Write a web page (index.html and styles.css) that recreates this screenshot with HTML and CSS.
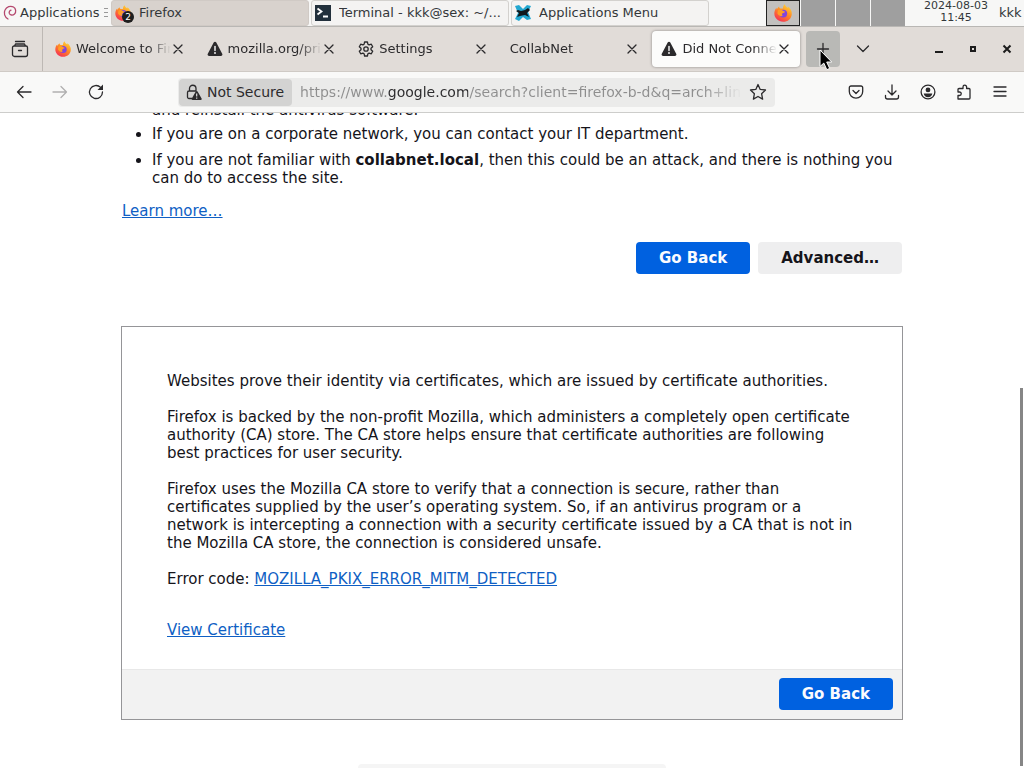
FILE: index.html
```html
<!DOCTYPE html>
<html lang="en">
<head>
  <meta charset="UTF-8">
  <meta name="viewport" content="width=device-width, initial-scale=1">
  <title>Did Not Connect</title>
  <link rel="stylesheet" href="styles.css">
</head>
<body>
  <svg class="defs" aria-hidden="true">
    <defs>
      <linearGradient id="fire" x1="0.8" y1="0" x2="0.2" y2="1">
        <stop offset="0" stop-color="#ffd93b"/>
        <stop offset="0.45" stop-color="#ff8a22"/>
        <stop offset="1" stop-color="#f5295a"/>
      </linearGradient>
      <symbol id="firefox" viewBox="0 0 16 16">
        <path fill="url(#fire)" d="M9.6 0.3c0.3 1.6 1.6 2.3 2.6 3.3 0.2-0.5 0.1-0.9 0-1.300C14.700 3.900 16 6.200 15.800 9c-0.300 4-3.600 6.800-7.700 6.800C3.800 15.800 0.300 12.600 0.300 8.500c0-1.900 0.600-3.700 1.900-5.100l0.200 1.500C3 4 3.500 3 4.500 2.300c0 0.800 0.400 1.400 1 1.800 1-0.200 1.700-0.200 2.400 0C8 2.500 8.500 1.100 9.600 0.300z"/>
        <circle cx="8.200" cy="8.500" r="3.500" fill="#8244dc"/>
        <path fill="#ff9d25" d="M3.500 5.500c1.500-1 3.200-0.600 4.400 0.500 0.500 0.500 1.500 0.600 2 0.800-0.300 0.800-1.500 1-2 1.300-0.900 0.500-1 1.700-0.200 2.400-1 0.800-3.200 0.600-4.700-2z"/>
      </symbol>
      <symbol id="warning" viewBox="0 0 16 16">
        <path fill="#2b2a2c" d="M6.700 1.500a1.500 1.500 0 0 1 2.600 0l5.900 11.200a1.500 1.500 0 0 1-1.300 2.200H2.100a1.500 1.500 0 0 1-1.300-2.200z"/>
        <path stroke="#fff" stroke-width="1.400" stroke-linecap="round" d="M8 5.500v4"/>
        <circle cx="8" cy="12" r="0.900" fill="#fff"/>
      </symbol>
      <symbol id="close" viewBox="0 0 12 12">
        <path class="line" d="M2 2l8 8M10 2l-8 8"/>
      </symbol>
    </defs>
  </svg>

  <!-- desktop panel -->
  <div class="panel">
    <button class="apps">
      <svg width="14" height="16" viewBox="0 0 14 16"><path fill="none" stroke="#b5486e" stroke-width="1.300" stroke-linecap="round" d="M5 14C1.500 12 0.500 8 2 5c1.500-3.300 5.500-4.600 8.500-3C13 3.500 13.400 7 11.500 9 9.800 10.600 7 10.300 6.300 8.400 5.800 6.800 6.800 5.500 8 5.200"/></svg>
      Applications
    </button>
    <span class="grip"></span>
    <div class="tasks">
      <button class="task pressed">
        <span class="task-icon"><svg width="16" height="16"><use href="#firefox"/></svg><span class="badge">2</span></span>
        <span class="task-name">Firefox</span>
      </button>
      <button class="task">
        <span class="task-icon"><svg width="16" height="16" viewBox="0 0 16 16"><path fill="#22303c" d="M0 0h16v16H0z"/><path fill="none" stroke="#fff" stroke-width="1.800" d="M2.500 3.500l4 3-4 3M8 11.500h5"/></svg></span>
        <span class="task-name">Terminal - kkk@sex: ~/...</span>
      </button>
      <button class="task">
        <span class="task-icon"><svg width="16" height="16" viewBox="0 0 16 16"><path fill="#22a7d0" d="M0 1l4-1 4 4 4-4 4 1-3 6 3 7-4 1-4-3-4 4-4-2 3-6z"/><path fill="#10181c" d="M3 5l3 1 4-1 3-2 2 2-3 3 2 4-4-2-5 1-3 1 2-4-3-2z"/></svg></span>
        <span class="task-name">Applications Menu</span>
      </button>
    </div>
    <div class="pager">
      <span class="desk current"><svg width="18" height="18"><use href="#firefox"/></svg></span>
      <span class="desk"></span>
      <span class="desk"></span>
      <span class="desk"></span>
    </div>
    <div class="clock">2024-08-03<br>11:45</div>
    <div class="user">kkk</div>
  </div>

  <!-- tab strip -->
  <div class="tabbar">
    <button class="view" aria-label="Firefox View">
      <svg width="18" height="18" viewBox="0 0 18 18"><path class="line" d="M4.500 1.500h9M3.500 6l1-2h9l1 2M3 6h12a1.500 1.500 0 0 1 1.500 1.500v7a2 2 0 0 1-2 2h-11a2 2 0 0 1-2-2v-7A1.500 1.500 0 0 1 3 6zM7.500 10.500h3"/></svg>
    </button>
    <div class="tabs">
      <div class="tab">
        <svg width="16" height="16"><use href="#firefox"/></svg>
        <span class="title">Welcome to Firefox</span>
        <button class="close" aria-label="Close tab"><svg width="12" height="12"><use href="#close"/></svg></button>
      </div>
      <div class="tab">
        <svg width="16" height="16"><use href="#warning"/></svg>
        <span class="title">mozilla.org/privacy</span>
        <button class="close" aria-label="Close tab"><svg width="12" height="12"><use href="#close"/></svg></button>
      </div>
      <div class="tab">
        <svg width="16" height="16" viewBox="0 0 16 16"><path class="line" d="M6.600 1h2.800l0.500 2.200 1.200 0.700 2.200-0.700 1.400 2.500L13 7.200v1.600l1.700 1.500-1.400 2.500-2.200-0.700-1.200 0.700L9.400 15H6.600l-0.500-2.200-1.200-0.700-2.200 0.700-1.400-2.500L3 8.800V7.200L1.300 5.700l1.400-2.500 2.200 0.700 1.200-0.700z"/><circle class="line" cx="8" cy="8" r="2.200"/></svg>
        <span class="title">Settings</span>
        <button class="close" aria-label="Close tab"><svg width="12" height="12"><use href="#close"/></svg></button>
      </div>
      <div class="tab">
        <span class="title">CollabNet</span>
        <button class="close" aria-label="Close tab"><svg width="12" height="12"><use href="#close"/></svg></button>
      </div>
      <div class="tab active">
        <svg width="16" height="16"><use href="#warning"/></svg>
        <span class="title">Did Not Connect</span>
        <button class="close" aria-label="Close tab"><svg width="12" height="12"><use href="#close"/></svg></button>
      </div>
    </div>
    <button class="icon-btn new-tab" aria-label="New tab">
      <svg width="16" height="16" viewBox="0 0 16 16"><path class="line" d="M8 2.500v11M2.500 8h11"/></svg>
      <svg class="pointer" width="14" height="22" viewBox="0 0 14 22"><path fill="#000" stroke="#fff" d="M1 1v16.500l3.800-3.400 3 6.600 2.900-1.300-3-6.400h5z"/></svg>
    </button>
    <button class="icon-btn" aria-label="List all tabs">
      <svg width="16" height="16" viewBox="0 0 16 16"><path class="line" d="M2.500 5l5.500 5.500L13.500 5"/></svg>
    </button>
    <div class="window-controls">
      <button class="icon-btn" aria-label="Minimize"><svg width="10" height="10" viewBox="0 0 10 10"><path fill="#1c1c1c" d="M1 7h8v2H1z"/></svg></button>
      <button class="icon-btn" aria-label="Restore"><svg width="10" height="10" viewBox="0 0 10 10"><path fill="none" stroke="#1c1c1c" stroke-width="2" d="M3 3h4v4H3z"/></svg></button>
      <button class="icon-btn" aria-label="Close"><svg width="10" height="10" viewBox="0 0 10 10"><path stroke="#1c1c1c" stroke-width="2" d="M1.500 1.500l7 7M8.500 1.500l-7 7"/></svg></button>
    </div>
  </div>

  <!-- navigation bar -->
  <div class="toolbar">
    <button class="tool" aria-label="Back"><svg width="16" height="16" viewBox="0 0 16 16"><path class="line" d="M15 8H1.500M7 2.500L1.500 8 7 13.500"/></svg></button>
    <button class="tool" aria-label="Forward" disabled><svg width="16" height="16" viewBox="0 0 16 16"><path class="line" d="M1 8h13.500M9 2.500L14.500 8 9 13.500"/></svg></button>
    <button class="tool" aria-label="Reload"><svg width="16" height="16" viewBox="0 0 16 16"><path class="line" d="M14.500 8A6.500 6.500 0 1 1 12.600 3.400L14 4.800"/><path fill="#2b2a2c" d="M15 0.500V6H9.500z"/></svg></button>
    <div class="urlbar">
      <button class="identity">
        <svg width="16" height="16" viewBox="0 0 16 16"><path class="line" d="M6 14.500H3a1.500 1.500 0 0 1-1.500-1.500V8.500A1.500 1.500 0 0 1 3 7h7M3.500 7V4.500a3.200 3.200 0 0 1 6.500 0V7"/><path fill="#2b2a2c" d="M9.800 7.500a1 1 0 0 1 1.800 0l4 7a0.900 0.900 0 0 1-0.800 1.400H6.600a0.900 0.900 0 0 1-0.800-1.400z"/><path stroke="#ddd" stroke-width="1.200" d="M10.700 9.500v3M10.700 13.500v1.200"/></svg>
        Not Secure
      </button>
      <input class="address" type="text" aria-label="Address" value="https://www.google.com/search?client=firefox-b-d&amp;q=arch+linux">
      <button class="star" aria-label="Bookmark this page"><svg width="18" height="18" viewBox="0 0 18 18"><path class="line" d="M9 1.500l2.200 4.900 5.300 0.600-3.900 3.700 1 5.400L9 13.500l-4.600 2.600 1-5.400L1.500 7l5.300-0.600z"/></svg></button>
    </div>
    <button class="tool" aria-label="Save to Pocket"><svg width="16" height="16" viewBox="0 0 16 16"><path class="line" d="M3 2h10a1.700 1.700 0 0 1 1.700 1.700V7.500a6.700 6.700 0 0 1-13.400 0V3.700A1.700 1.700 0 0 1 3 2zM5 6.500l3 3 3-3"/></svg></button>
    <button class="tool" aria-label="Downloads"><svg width="16" height="16" viewBox="0 0 16 16"><path class="line" d="M8 1v10M4 7l4 4 4-4M1.500 11.500v1.500a2 2 0 0 0 2 2h9a2 2 0 0 0 2-2v-1.500"/></svg></button>
    <button class="tool" aria-label="Account"><svg width="16" height="16" viewBox="0 0 16 16"><circle class="line" cx="8" cy="8" r="6.900"/><circle cx="8" cy="5.900" r="2.400" fill="#2b2a2c"/><path fill="#2b2a2c" d="M3.700 9.500h8.600c-0.300 2.300-2 3.700-4.300 3.700s-4-1.400-4.300-3.700z"/></svg></button>
    <button class="tool" aria-label="Extensions"><svg width="16" height="16" viewBox="0 0 16 16"><path class="line" d="M2 15V11.500h1.500a1.700 1.700 0 0 0 0-3.500H2V5.500a1 1 0 0 1 1-1h4V3a1.800 1.800 0 0 1 3.600 0v1.500h2.400a1 1 0 0 1 1 1V14a1 1 0 0 1-1 1z"/></svg></button>
    <button class="tool" aria-label="Menu"><svg width="16" height="16" viewBox="0 0 16 16"><path class="line" d="M2 3h12M2 7.500h12M2 12h12"/></svg></button>
  </div>

  <main class="page">
    <div class="content">
      <ul>
        <li class="rest">and reinstall the antivirus software.</li>
        <li>If you are on a corporate network, you can contact your IT department.</li>
        <li>If you are not familiar with <b>collabnet.local</b>, then this could be an attack, and there is nothing you can do to access the site.</li>
      </ul>
      <a href="#" class="learn">Learn more…</a>
      <div class="buttons">
        <button class="btn primary">Go Back</button>
        <button class="btn">Advanced…</button>
      </div>
      <section class="advanced">
        <div class="advanced-text">
          <p>Websites prove their identity via certificates, which are issued by certificate authorities.</p>
          <p>Firefox is backed by the non-profit Mozilla, which administers a completely open certificate authority (CA) store. The CA store helps ensure that certificate authorities are following best practices for user security.</p>
          <p>Firefox uses the Mozilla CA store to verify that a connection is secure, rather than certificates supplied by the user’s operating system. So, if an antivirus program or a network is intercepting a connection with a security certificate issued by a CA that is not in the Mozilla CA store, the connection is considered unsafe.</p>
          <p>Error code: <a href="#">MOZILLA_PKIX_ERROR_MITM_DETECTED</a></p>
          <a href="#" class="certificate">View Certificate</a>
        </div>
        <div class="advanced-footer">
          <button class="btn primary">Go Back</button>
        </div>
      </section>
    </div>
    <div class="scroll-thumb"></div>
    <div class="dock-edge"></div>
  </main>
</body>
</html>
```
FILE: styles.css
```css
* { box-sizing: border-box; }
body { margin: 0; height: 100vh; display: flex; flex-direction: column; overflow: hidden; background: #fff; color: #15141a; font: 15px/18px "DejaVu Sans", sans-serif; }
button { font: inherit; color: inherit; background: none; border: 0; padding: 0; margin: 0; }
svg { display: block; flex: none; }
a { color: #0f5fc4; text-decoration: underline; }
.defs { position: absolute; width: 0; height: 0; }
.line { fill: none; stroke: #2b2a2c; stroke-width: 1.3; stroke-linecap: round; stroke-linejoin: round; }

/* desktop panel */
.panel { flex: none; display: flex; align-items: stretch; height: 27px; background: #f7f7f6; border-bottom: 1px solid #b9b7b4; color: #33373a; font-size: 13px; overflow: hidden; }
.apps { display: flex; align-items: center; gap: 3px; padding-left: 3px; width: 102px; white-space: nowrap; }
.grip { width: 4px; margin: 8px 3px 8px 2px; background: repeating-linear-gradient(#999 0 1px, transparent 1px 4px); }
.tasks { flex: 1; display: flex; gap: 2px; }
.task { flex: 0 1 198px; min-width: 0; display: flex; align-items: center; gap: 8px; padding: 0 3px; border: 1px solid #d3d1ce; border-radius: 3px; background: #f4f3f2; }
.task.pressed { background: #d8d2cd; border-color: #d0cac5; }
.task-icon { position: relative; }
.badge { position: absolute; left: 7px; top: 6px; width: 12px; height: 12px; border-radius: 50%; background: #1e1e1e; color: #fff; font-size: 9px; line-height: 12px; text-align: center; }
.task-name { overflow: hidden; white-space: nowrap; }
.pager { display: flex; gap: 1px; }
.desk { width: 34px; background: #9f9f9f; }
.desk.current { display: flex; align-items: center; justify-content: center; border: 1px solid #222; background: #c2c0be; }
.clock { flex: none; width: 94px; padding-left: 8px; font-size: 11px; line-height: 12px; text-align: center; }
.user { flex: none; width: 25px; line-height: 26px; }

/* tab strip */
.tabbar { flex: none; display: flex; align-items: center; height: 45px; background: #e1dcd8; border-bottom: 1px solid #cfcac5; color: #2b2a2c; font-size: 13px; }
.view { flex: none; align-self: stretch; width: 43px; display: flex; align-items: center; justify-content: center; border-right: 1px solid #bdb8b4; padding-right: 3px; }
.tabs { flex: 0 1 763px; min-width: 0; display: flex; gap: 4px; padding: 0 6px 0 3px; }
.tab { flex: 1; min-width: 0; display: flex; align-items: center; gap: 5px; height: 36px; padding: 0 10px 0 9px; border-radius: 4px; }
.tab.active { background: #fcfcfb; box-shadow: 0 0 3px rgba(0,0,0,0.4); }
.title { flex: 1; overflow: hidden; white-space: nowrap; mask-image: linear-gradient(to left, transparent, #000 24px); }
.close { margin-left: -4px; }
.icon-btn { flex: none; width: 34px; height: 36px; display: flex; align-items: center; justify-content: center; border-radius: 4px; }
.new-tab { position: relative; background: #b9b9b6; margin-right: 6px; }
.pointer { position: absolute; left: 13px; top: 18px; }
.window-controls { display: flex; margin-left: auto; }

/* navigation bar */
.toolbar { flex: none; display: flex; align-items: center; height: 41px; padding: 0 6px; background: #f9f9f8; border-bottom: 1px solid #cdcdcb; color: #2b2a2c; font-size: 14px; }
.tool { flex: none; width: 36px; height: 32px; display: flex; align-items: center; justify-content: center; }
.tool:disabled { opacity: 0.35; }
.urlbar { flex: 1; min-width: 0; display: flex; align-items: center; height: 29px; margin: 0 63px 0 64px; padding: 1px; border-radius: 4px; background: #ebebea; }
.identity { flex: none; display: flex; align-items: center; gap: 5px; height: 27px; padding: 0 8px 0 7px; border-radius: 4px; background: #d3d3d2; white-space: nowrap; }
/* the host name is darker than the rest, and the end fades out */
.address { flex: 1; min-width: 0; padding: 0; margin-left: 8px; border: 0; outline: 0; font: inherit; color: transparent; background: linear-gradient(to right, #8e8e8e 87px, #2b2a2c 87px 168px, #8e8e8e 168px calc(100% - 40px), transparent); background-clip: text; -webkit-background-clip: text; }
.star { flex: none; width: 32px; display: flex; justify-content: center; }

/* error page */
.page { flex: 1; position: relative; overflow: hidden; }
.content { max-width: 780px; margin: -12px auto 0; }
ul { margin: 0 0 15px; padding-left: 30px; }
li { margin-bottom: 8px; }
.rest { list-style: none; margin-bottom: 6px; }
.learn { display: block; width: max-content; }
.buttons { display: flex; justify-content: flex-end; gap: 8px; margin-top: 22px; }
.btn { height: 32px; padding: 0 23px; border-radius: 4px; background: #eeeeef; font-weight: bold; }
.btn.primary { background: #0061e0; color: #fbfbfe; }
.advanced { margin: 52px -1px 0; border: 1px solid #959598; }
.advanced-text { padding: 45px 45px 30px; }
.advanced-text p { margin: 0 0 18px; }
.certificate { display: block; width: max-content; margin-top: 33px; }
.advanced-footer { display: flex; justify-content: flex-end; padding: 8px 9px 9px; background: #f2f2f2; border-top: 1px solid #e8e8e8; }
.scroll-thumb { position: absolute; right: 1px; top: 42%; bottom: 2px; width: 3px; background: #868686; }
.dock-edge { position: absolute; left: 35%; right: 35%; bottom: 0; height: 4px; border-radius: 4px 4px 0 0; background: #f5f5f5; }
```
